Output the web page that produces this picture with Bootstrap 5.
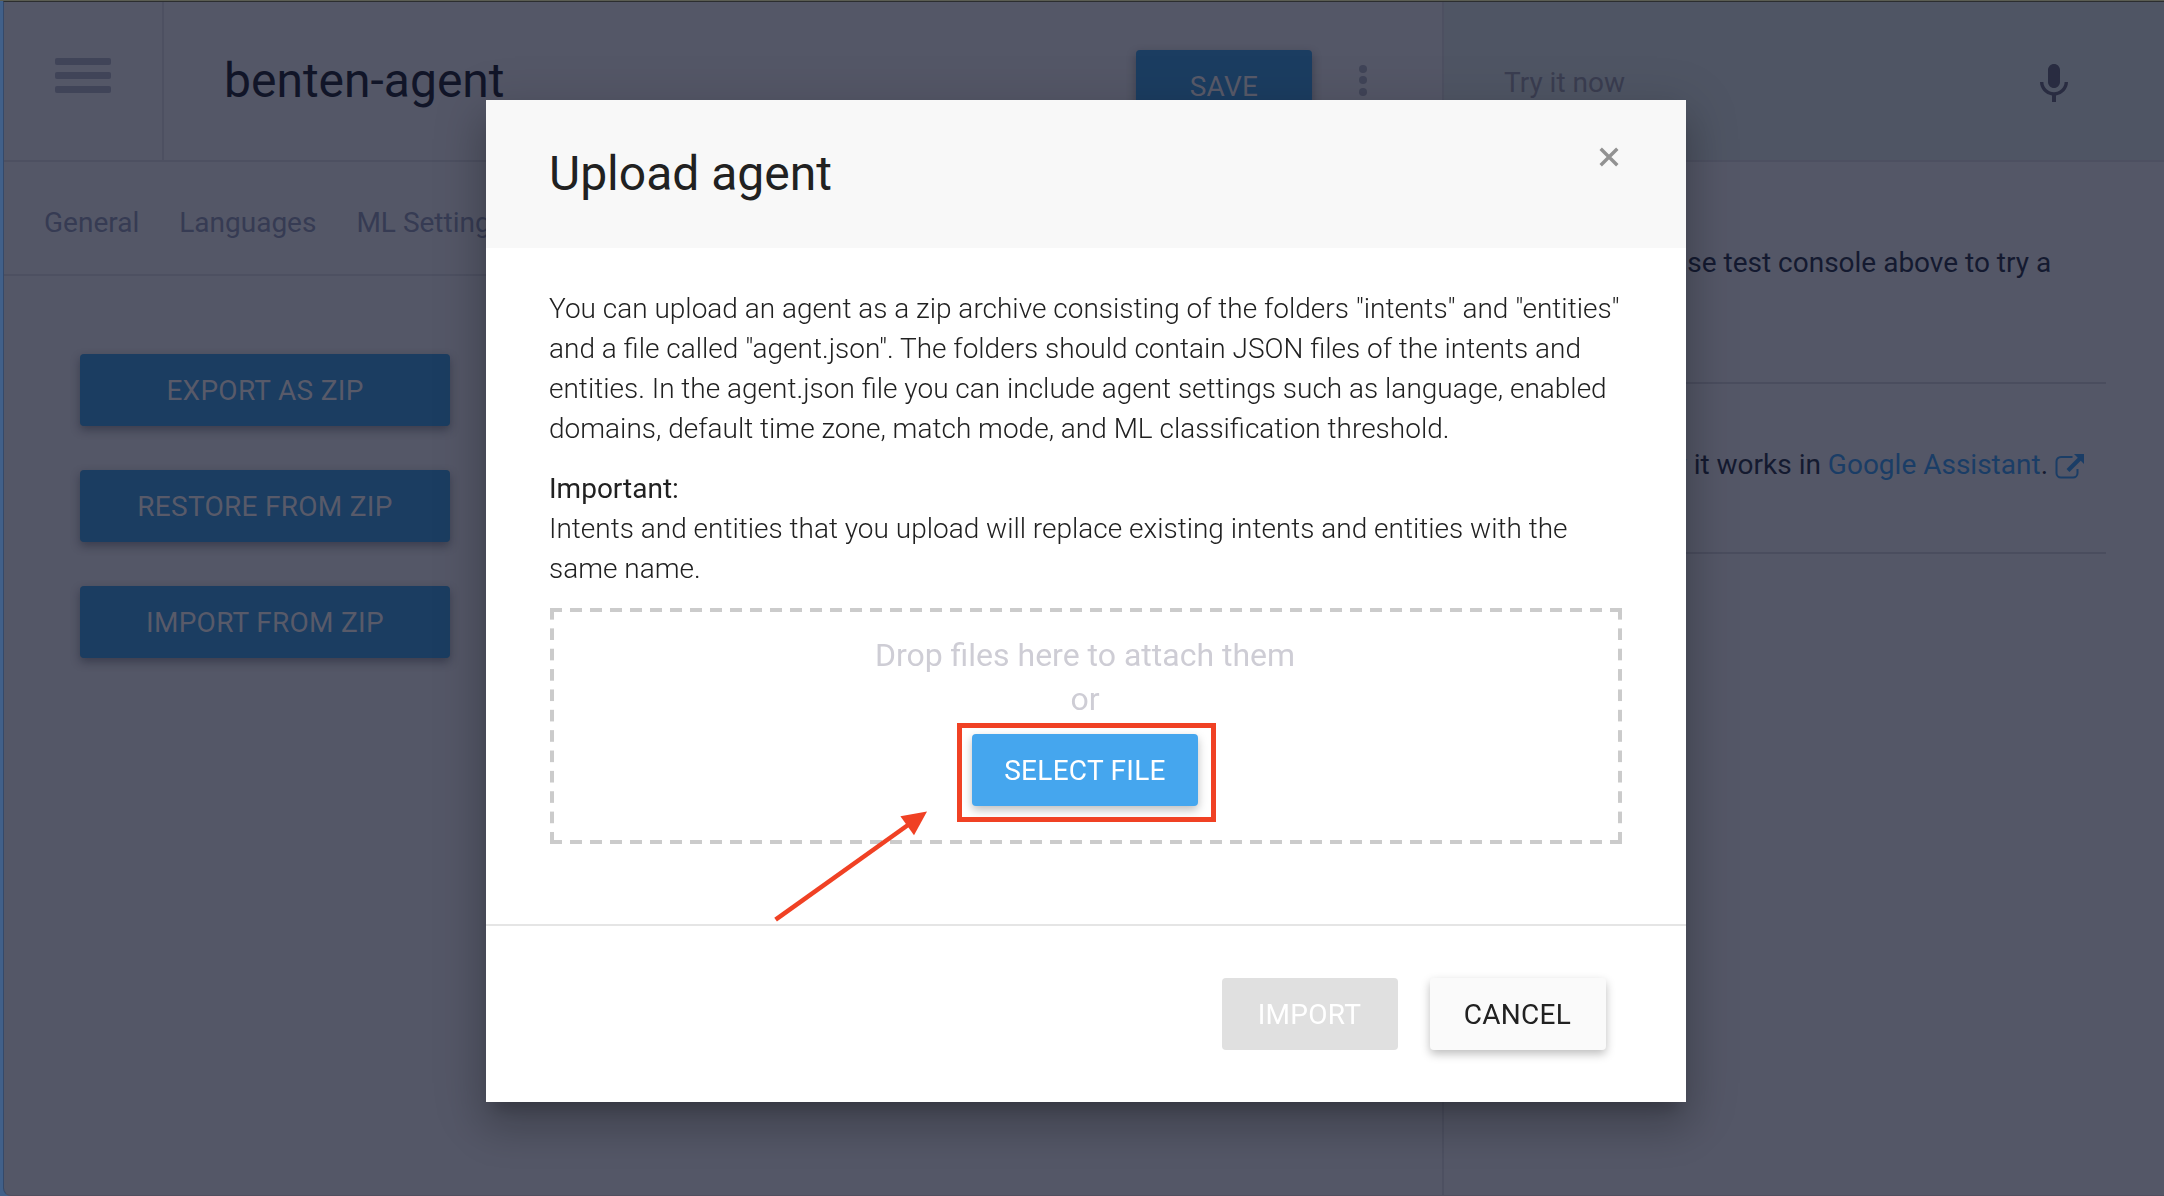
<!DOCTYPE html>
<html lang="en">
<head>
<meta charset="utf-8">
<meta name="viewport" content="width=device-width, initial-scale=1">
<title>benten-agent</title>
<link href="https://cdn.jsdelivr.net/npm/bootstrap@5.3.0/dist/css/bootstrap.min.css" rel="stylesheet">
<style>
  html, body { height: 100%; overflow: hidden; }
  body { font-family: Roboto, "Liberation Sans", sans-serif; font-size: 28px; line-height: 40px; color: #141a30; background: #416089; }
  .app-frame { height: 1196px; border-top: 1px solid #5b5d52; padding-left: 3px; }
  .app-shell { background: #545767; border-top: 1px solid #2c2e30; border-left: 1px solid #34496a; border-bottom: 1px solid #504f5f; border-bottom-left-radius: 8px; }
  .main-pane { width: 1438px; }
  .test-pane { border-left: 2px solid #4d5061; }
  .top-bar { height: 160px; border-bottom: 2px solid #4d5061; }
  .menu-cell { width: 160px; border-right: 2px solid #4d5061; padding: 56px 0 0 51px; }
  .menu-cell span { display: block; width: 56px; height: 7px; margin-bottom: 7px; border-radius: 2px; background: #404458; }
  .agent-name { font-size: 48px; line-height: 56px; color: #111528; padding: 51px 0 0 60px; font-weight: 400; }
  .bar-actions { padding: 48px 74px 0 0; gap: 47px; }
  .dots { width: 8px; gap: 3.4px; padding-top: 15px; margin-right: 1px; }
  .dots i { display: block; width: 8px; height: 8px; border-radius: 50%; background: #404458; }
  .tab-row { height: 114px; border-bottom: 2px solid #4d5061; padding: 41px 0 0 40px; gap: 40px; }
  .tab-row a { color: #363b53; text-decoration: none; white-space: nowrap; }
  .zip-list { padding: 78px 0 0 76px; gap: 44px; width: 446px; }
  .btn.md { height: 72px; line-height: 72px; padding: 1px 0 0; border: 0; border-radius: 4px; font-size: 28px; letter-spacing: .28px; text-transform: uppercase; box-shadow: 0 4px 10px 0 rgba(0,0,0,.26); }
  .btn.md-176 { width: 176px; }
  .btn.md-dim { background: #1b3d61; color: #585a69; box-shadow: 0 4px 10px 0 rgba(20,22,40,.4); }
  .try-bar { background: #4f5564; color: #3a3d50; padding: 58px 86px 0 60px; }
  .try-text { padding-top: 3px; }
  .note { margin: 0 58px 0 60px; padding-left: 77px; border-bottom: 2px solid #4a4d5e; white-space: nowrap; }
  .note-a { height: 222px; padding-top: 81px; }
  .note-b { height: 170px; padding-top: 61px; }
  .note a { color: #1a3d66; text-decoration: none; }
  .modal-dialog.upload { width: 1200px; max-width: 1200px; margin: 100px 0 0 486px; }
  .upload .modal-content { height: 1002px; border: 0; border-radius: 0; color: #212121;
    box-shadow: 0 14px 16px -8px rgba(0,0,0,.2), 0 26px 38px 4px rgba(0,0,0,.14), 0 10px 48px 8px rgba(0,0,0,.12); }
  .upload .modal-header { height: 148px; background: #f8f8f8; border: 0; border-radius: 0; padding: 0 67px 0 63px; }
  .upload .modal-title { font-size: 48px; line-height: 56px; font-weight: 400; }
  .shut { margin-top: -35px; }
  .upload .modal-body { flex: none; height: 676px; padding: 41px 64px 0; font-weight: 300; }
  .upload .modal-body p { margin: 0 0 20px -1px; white-space: nowrap; }
  .upload .modal-body p + p { margin-bottom: 19px; }
  .upload .modal-body strong { font-weight: 400; }
  .upload .modal-footer { height: 178px; border-top: 2px solid #e5e5e5; padding: 52px 80px 0 0; gap: 32px; flex: none; align-items: flex-start; }
  .upload .modal-footer > * { margin: 0; padding-right: 1px; }
  .drop-zone { height: 236px; padding: 25px 2px 0 0; font-size: 32px; line-height: 44px; font-weight: 400; color: #cecdd5;
    --dash: #cbcbcb 12px, transparent 12px;
    background:
      linear-gradient(90deg, var(--dash)) 0 0 / 20px 4px repeat-x,
      linear-gradient(90deg, var(--dash)) 0 100% / 20px 4px repeat-x,
      linear-gradient(180deg, var(--dash)) 0 0 / 4px 20.364px repeat-y,
      linear-gradient(180deg, var(--dash)) 100% 0 / 4px 20.364px repeat-y; }
  .pick { margin-top: 13px; width: 226px; height: 72px; }
  .pick-btn { width: 226px; background: #45a6ee; color: #fff; }
  .pick-frame { position: absolute; left: -15.5px; top: -11.5px; width: 259px; height: 99px; border: 5px solid #f04124; }
  .arrow { position: absolute; left: 284px; top: 705px; }
  .btn.md-off { background: #e0e0e0; color: #fff; box-shadow: none; opacity: 1; }
  .btn.md-plain { background: #fafafa; color: #212121; }
</style>
<script src="https://cdn.jsdelivr.net/npm/bootstrap@5.3.0/dist/js/bootstrap.bundle.min.js"></script>
</head>
<body>
<div class="app-frame">
  <div class="app-shell d-flex h-100">
    <main class="main-pane flex-shrink-0">
      <div class="top-bar d-flex">
        <div class="menu-cell flex-shrink-0"><span></span><span></span><span></span></div>
        <h1 class="agent-name mb-0">benten-agent</h1>
        <div class="bar-actions d-flex ms-auto align-items-start">
          <button class="btn md md-176 md-dim">Save</button>
          <div class="dots d-flex flex-column"><i></i><i></i><i></i></div>
        </div>
      </div>
      <nav class="tab-row d-flex">
        <a href="#">General</a><a href="#">Languages</a><a href="#">ML Settings</a>
      </nav>
      <div class="zip-list d-flex flex-column">
        <button class="btn md md-dim">Export as ZIP</button>
        <button class="btn md md-dim">Restore from ZIP</button>
        <button class="btn md md-dim">Import from ZIP</button>
      </div>
    </main>
    <aside class="test-pane flex-grow-1">
      <div class="top-bar try-bar d-flex justify-content-between align-items-start">
        <span class="try-text">Try it now</span>
        <svg width="48" height="48" viewBox="0 0 24 24" fill="#292c41"><path d="M12 14c1.66 0 2.99-1.34 2.99-3L15 5c0-1.66-1.34-3-3-3S9 3.34 9 5v6c0 1.66 1.34 3 3 3zm5.3-3c0 3-2.54 5.1-5.3 5.1S6.700 14 6.700 11H5c0 3.410 2.720 6.230 6 6.720V21h2v-3.280c3.280-.480 6-3.300 6-6.720h-1.700z"/></svg>
      </div>
      <div class="note note-a">Please use test console above to try a</div>
      <div class="note note-b">See how it works in <a href="#">Google Assistant</a>.
        <svg class="ext" width="30" height="25" viewBox="0 0 30 25" fill="none" stroke="#1a3d66" stroke-width="2"><path d="M17.500 3H6a4.500 4.500 0 0 0-4.500 4.500v11.500A4.500 4.500 0 0 0 6 23.500h12a4.500 4.500 0 0 0 4.500-4.500v-4"/><path d="M13 16.500 25 4.500" stroke-width="4"/><path d="M19 0h10v10z" fill="#1a3d66" stroke="none"/></svg></div>
    </aside>
  </div>
</div>

<div class="modal d-block" tabindex="-1" role="dialog">
  <div class="modal-dialog upload">
    <div class="modal-content">
      <div class="modal-header">
        <h2 class="modal-title">Upload agent</h2>
        <svg class="shut" width="20" height="20" viewBox="0 0 20 20" stroke="#929292" stroke-width="3.400"><path d="M1.700 1.700 18.300 18.300M18.300 1.700 1.700 18.300"/></svg>
      </div>
      <div class="modal-body">
        <p>You can upload an agent as a zip archive consisting of the folders "intents" and "entities"<br>and a file called "agent.json". The folders should contain JSON files of the intents and<br>entities. In the agent.json file you can include agent settings such as language, enabled<br>domains, default time zone, match mode, and ML classification threshold.</p>
        <p><strong>Important:</strong><br>Intents and entities that you upload will replace existing intents and entities with the<br>same name.</p>
        <div class="drop-zone text-center">
          <div>Drop files here to attach them</div>
          <div>or</div>
          <div class="pick position-relative mx-auto">
            <button class="btn md pick-btn d-block">Select file</button>
            <div class="pick-frame"></div>
          </div>
        </div>
      </div>
      <div class="modal-footer">
        <button class="btn md md-176 md-off" disabled>Import</button>
        <button class="btn md md-176 md-plain">Cancel</button>
      </div>
      <svg class="arrow" width="162" height="120" viewBox="0 0 162 120"><path d="M5.600 114.700 138 20" stroke="#f04124" stroke-width="4.600" fill="none"/><path d="M157 6.500 130.400 11.300 144 30.300z" fill="#f04124"/></svg>
    </div>
  </div>
</div>
</body>
</html>
